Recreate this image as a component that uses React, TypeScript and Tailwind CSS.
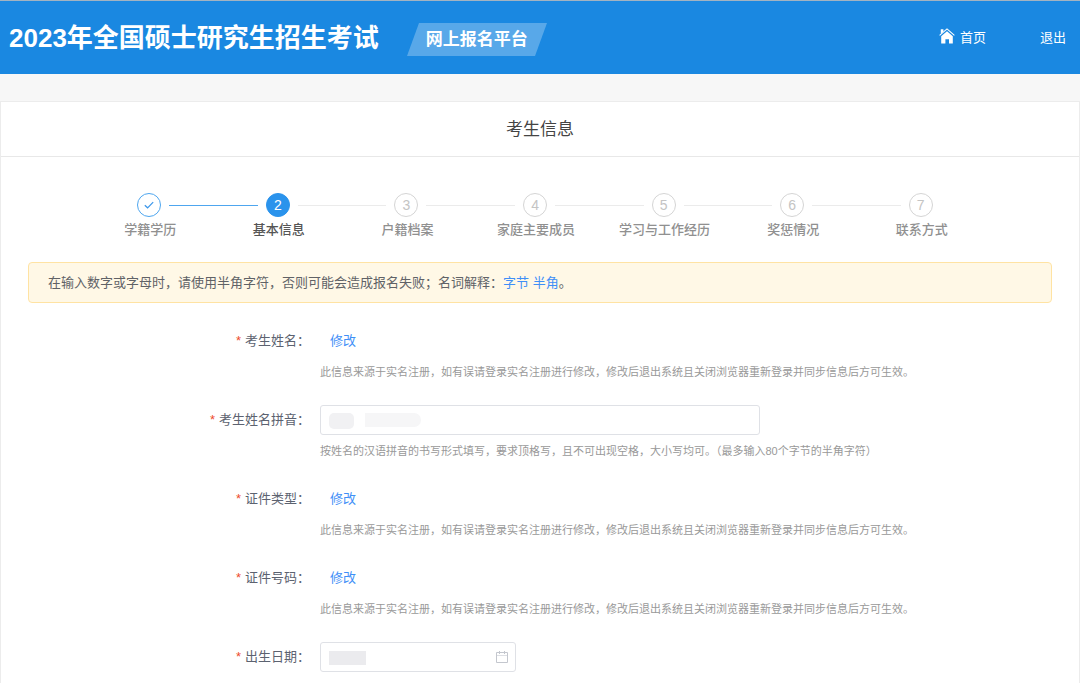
import { ReactNode } from 'react'
import { clsx } from 'clsx'

const STEPS = [
  '学籍学历',
  '基本信息',
  '户籍档案',
  '家庭主要成员',
  '学习与工作经历',
  '奖惩情况',
  '联系方式',
]

const CURRENT_STEP = 1

const REAL_NAME_HINT =
  '此信息来源于实名注册，如有误请登录实名注册进行修改，修改后退出系统且关闭浏览器重新登录并同步信息后方可生效。'

function HomeIcon() {
  return (
    <svg className="mb-1 h-4 w-4" viewBox="0 0 16 16" fill="none" aria-hidden="true">
      <path d="M2.2 8.3 8 3.2l5.8 5.1V15.5H10v-4.2H6.4v4.2H2.2z" fill="#fff" />
      <path d="M.6 7.4 8 .9l7.4 6.5" stroke="#fff" strokeWidth="1.1" />
      <path d="M1.8 1.2h2.6v2.2L1.8 5.7z" fill="#fff" />
    </svg>
  )
}

function CalendarIcon() {
  return (
    <svg className="h-3 w-3" viewBox="0 0 12 12" fill="none" aria-hidden="true">
      <path d="M.5 1.5h11v10H.5zM3.5 0v3M8.5 0v3" stroke="#c4c7ce" />
      <path d="M1 4.5h10" stroke="#dddfe4" />
    </svg>
  )
}

function CheckIcon() {
  return (
    <svg className="h-3 w-3" viewBox="0 0 12 12" fill="none" stroke="#3a96ea" aria-hidden="true">
      <path d="m1.8 6.2 2.8 2.6 5.6-5.6" strokeWidth="1.2" />
    </svg>
  )
}

function Header() {
  return (
    <header className="flex h-[74px] items-center border-t border-[#a3b3c1] bg-[#1a88e1] px-[9px] text-white">
      <h1 className="text-[26px] leading-8 font-bold whitespace-nowrap">2023年全国硕士研究生招生考试</h1>
      <div className="relative mt-1 ml-7 flex h-[33px] w-[140px] items-center justify-center">
        <svg className="absolute inset-0 h-full w-full" viewBox="0 0 140 33" preserveAspectRatio="none" aria-hidden="true">
          <path d="M12 0h128l-12 33H0z" fill="#58a8e9" />
        </svg>
        <span className="relative text-[17px] font-bold">网上报名平台</span>
      </div>
      <nav className="ml-auto flex items-center gap-[54px] pr-[5px] text-[13px] leading-5">
        <a href="#home" className="flex items-center gap-[5px]">
          <HomeIcon />
          首页
        </a>
        <a href="#logout">退出</a>
      </nav>
    </header>
  )
}

function Steps() {
  return (
    <ol className="flex pt-9 pr-[94px] pl-[84px]">
      {STEPS.map((name, index) => {
        const done = index < CURRENT_STEP
        const current = index === CURRENT_STEP

        return (
          <li key={name} className="flex flex-1 flex-col items-center">
            <div className="flex w-full items-center">
              <span
                className={clsx(
                  'h-px flex-1',
                  index > 0 && (index <= CURRENT_STEP ? 'bg-[#4ea6ef]' : 'bg-[#ebebeb]')
                )}
              />
              <span
                className={clsx(
                  'mx-2 flex h-6 w-6 items-center justify-center rounded-full border text-[14px]',
                  done && 'border-[#4ea6ef]',
                  current && 'border-[#2a93ec] bg-[#2a93ec] text-white',
                  !done && !current && 'border-[#d5d5d5] text-[#c4c4c4]'
                )}
              >
                {done ? <CheckIcon /> : index + 1}
              </span>
              <span
                className={clsx(
                  'h-px flex-1',
                  index < STEPS.length - 1 && (done ? 'bg-[#4ea6ef]' : 'bg-[#ebebeb]')
                )}
              />
            </div>
            <span
              className={clsx(
                'mt-[3px] pl-[2px] text-[13px] leading-5 font-medium whitespace-nowrap',
                current ? 'text-[#555]' : 'text-[#909090]'
              )}
            >
              {name}
            </span>
          </li>
        )
      })}
    </ol>
  )
}

interface FieldProps {
  label: string
  htmlFor: string
  hint?: string
  children: ReactNode
}

function Field({ label, htmlFor, hint, children }: FieldProps) {
  return (
    <div className="mb-[17px] flex items-start">
      <label htmlFor={htmlFor} className="w-[309px] shrink-0 text-right leading-[30px] text-[#5c6270]">
        <span className="mr-1 text-[#ee4b2b]">*</span>
        {label}：
      </label>
      <div className="ml-[10px] min-w-0 flex-1">
        <div className="flex h-[30px] items-center">{children}</div>
        {hint && <p className="text-[11px] leading-8 text-[#999]">{hint}</p>}
      </div>
    </div>
  )
}

function EditLink({ id }: { id: string }) {
  return (
    <a id={id} href="#edit" className="ml-[10px] text-[#3f8ff7]">
      修改
    </a>
  )
}

export default function App() {
  return (
    <div className="flex min-h-screen flex-col bg-[#f7f7f7] font-['Liberation_Sans','Noto_Sans_CJK_SC',sans-serif] text-[13px]">
      <Header />
      <main className="mt-[27px] flex-1 border border-b-0 border-[#ececec] bg-white">
        <h2 className="border-b border-[#e8e8e8] pt-[2px] text-center text-[17px] leading-[52px] text-[#444]">考生信息</h2>
        <Steps />
        <div className="mx-[27px] mt-[22px] rounded border border-[#ffe3a3] bg-[#fff8e6] px-[19px] leading-[39px] text-[#606266]">
          在输入数字或字母时，请使用半角字符，否则可能会造成报名失败；名词解释：
          <a href="#byte" className="text-[#3f8ff7]">字节</a>{' '}
          <a href="#half" className="text-[#3f8ff7]">半角</a>。
        </div>

        <form className="mt-[23px]">
          <Field label="考生姓名" htmlFor="name" hint={REAL_NAME_HINT}>
            <EditLink id="name" />
          </Field>
          <Field
            label="考生姓名拼音"
            htmlFor="pinyin"
            hint="按姓名的汉语拼音的书写形式填写，要求顶格写，且不可出现空格，大小写均可。（最多输入80个字节的半角字符）"
          >
            <div className="relative w-[440px]">
              <input
                id="pinyin"
                type="text"
                className="block h-[30px] w-full rounded-[3px] border border-[#dfe1e6] px-2 outline-none"
              />
              {/* masked value */}
              <span className="pointer-events-none absolute top-2 left-[9px] h-4 w-[25px] rounded-[5px] bg-[#f1f1f3]" />
              <span className="pointer-events-none absolute top-2 left-[45px] h-[14px] w-[56px] rounded-r-full bg-[#f6f6f7]" />
            </div>
          </Field>
          <Field label="证件类型" htmlFor="id-type" hint={REAL_NAME_HINT}>
            <EditLink id="id-type" />
          </Field>
          <Field label="证件号码" htmlFor="id-number" hint={REAL_NAME_HINT}>
            <EditLink id="id-number" />
          </Field>
          <Field label="出生日期" htmlFor="birthday">
            <div className="relative w-[196px]">
              <input
                id="birthday"
                type="text"
                className="block h-[30px] w-full rounded-[3px] border border-[#dfe1e6] px-2 outline-none"
              />
              <span className="pointer-events-none absolute top-[9px] left-[9px] h-[14px] w-[37px] bg-[#ebebee]" />
              <span className="pointer-events-none absolute top-[9px] right-2">
                <CalendarIcon />
              </span>
            </div>
          </Field>
        </form>
      </main>
    </div>
  )
}
